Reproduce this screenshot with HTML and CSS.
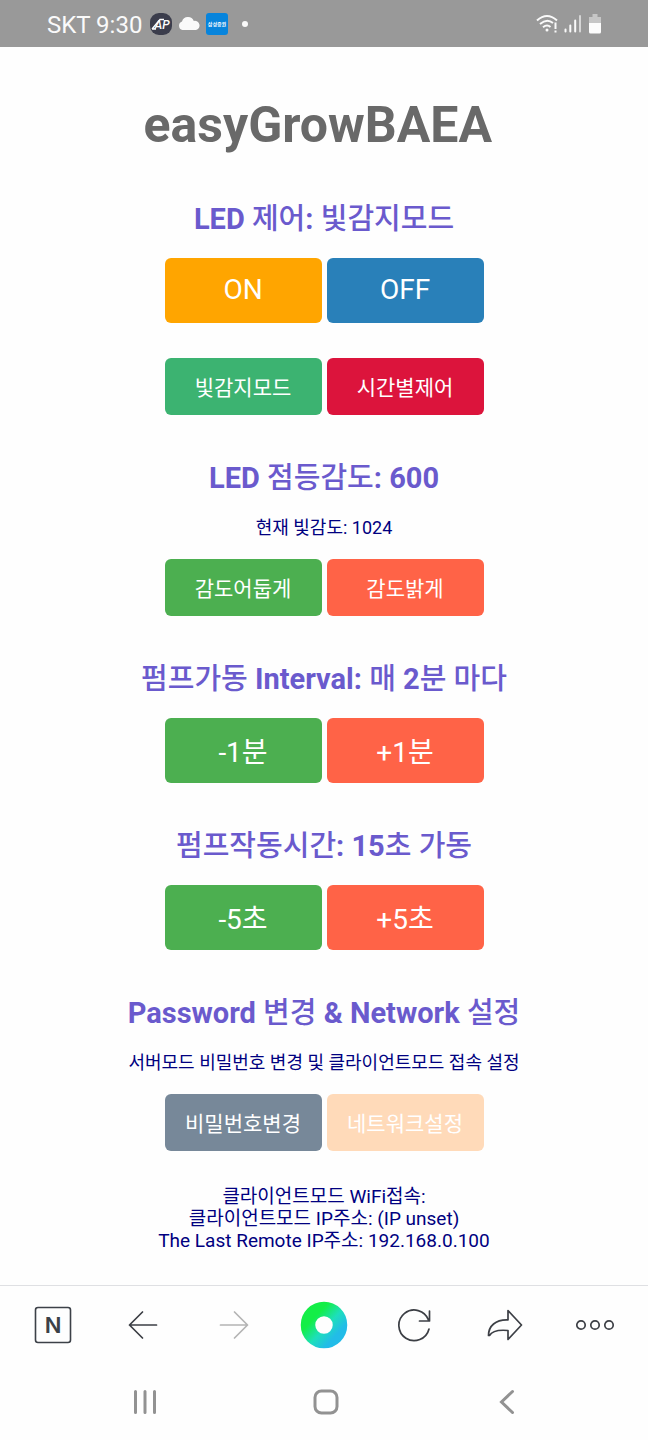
FILE: index.html
```html
<!DOCTYPE html>
<html lang="ko">
<head>
<meta charset="utf-8">
<meta name="viewport" content="width=device-width, initial-scale=1">
<title>easyGrowBAEA</title>
<link rel="stylesheet" href="styles.css">
</head>
<body>
<header class="status">
  <div class="status-group">
    <span class="carrier">SKT 9:30</span>
    <svg width="22" height="22" viewBox="0 0 22 22" aria-hidden="true">
      <rect width="22" height="22" rx="9" fill="#3b3d4c"/>
      <path d="M2 16L10 6.500h4M2 16h4" fill="none" stroke="#ffffff" stroke-width="1.300"/>
      <text class="ap-logo" x="12" y="16" text-anchor="middle">AP</text>
    </svg>
    <svg width="22" height="22" viewBox="0 0 22 22" aria-hidden="true">
      <path d="M4.500 17a4.500 4.500 0 0 1-.5-8.600A6.200 6.200 0 0 1 15.800 8a4.600 4.600 0 0 1 2.200 9z" fill="#fafafa"/>
    </svg>
    <svg width="22" height="22" viewBox="0 0 22 22" aria-hidden="true">
      <rect width="22" height="22" rx="3" fill="#0784dc"/>
      <text class="bank-logo" x="11" y="13" text-anchor="middle">삼성증권</text>
    </svg>
    <span class="more-dot"></span>
  </div>
  <div class="status-group status-right">
    <svg width="22" height="20" viewBox="0 0 22 20" fill="none" stroke="#fafafa" stroke-width="2" aria-hidden="true">
      <path d="M1 6.500Q11-2.500 21 6.500M4 10Q11 4 17 9M7 13.300Q11 10 14.500 13"/>
      <circle cx="11" cy="16" r="1.500" fill="#fafafa" stroke="none"/>
      <path d="M19.500 8.500v6.500M19.500 16.500v2"/>
    </svg>
    <svg width="18" height="20" viewBox="0 0 18 20" fill="none" stroke="#fafafa" stroke-width="2" stroke-linecap="round" aria-hidden="true">
      <path d="M1.500 15.500v2M6.300 11.500v6M11.200 6.500v11"/>
      <path d="M16 2v15.500" stroke="#d6d6d6"/>
    </svg>
    <svg width="14" height="20" viewBox="0 0 14 20" aria-hidden="true">
      <path d="M4.500 0h5v3H13v7H1V3h3.500z" fill="#c6c6c6"/>
      <path d="M1 9h12v9a1.500 1.500 0 0 1-1.500 1.500h-9A1.500 1.500 0 0 1 1 18z" fill="#fcfcfc"/>
    </svg>
  </div>
</header>

<main class="page">
  <h1>easyGrowBAEA&nbsp;</h1>

  <section>
    <h2>LED <span class="ko">제어</span>: <span class="ko">빛감지모드</span></h2>
    <div class="pair large">
      <button class="orange">ON</button>
      <button class="blue">OFF</button>
    </div>
    <div class="pair small spaced">
      <button class="sea">빛감지모드</button>
      <button class="crimson">시간별제어</button>
    </div>
  </section>

  <section>
    <h2>LED <span class="ko">점등감도</span>: 600</h2>
    <p class="note">현재 빛감도: 1024</p>
    <div class="pair small">
      <button class="green">감도어둡게</button>
      <button class="tomato">감도밝게</button>
    </div>
  </section>

  <section>
    <h2><span class="ko">펌프가동</span> Interval: <span class="ko">매</span> 2<span class="ko">분 마다</span></h2>
    <div class="pair large">
      <button class="green">-1분</button>
      <button class="tomato">+1분</button>
    </div>
  </section>

  <section>
    <h2><span class="ko">펌프작동시간</span>: 15<span class="ko">초 가동</span></h2>
    <div class="pair large">
      <button class="green">-5초</button>
      <button class="tomato">+5초</button>
    </div>
  </section>

  <section>
    <h2>Password <span class="ko">변경</span> &amp; Network <span class="ko">설정</span></h2>
    <p class="note">서버모드 비밀번호 변경 및 클라이언트모드 접속 설정</p>
    <div class="pair small">
      <button class="slate">비밀번호변경</button>
      <button class="peach">네트워크설정</button>
    </div>
    <p class="info">클라이언트모드 WiFi접속:<br>클라이언트모드 IP주소: (IP unset)<br>The Last Remote IP주소: 192.168.0.100</p>
  </section>
</main>

<nav class="toolbar" aria-label="브라우저">
  <button aria-label="홈">
    <svg width="38" height="38" viewBox="0 0 38 38" aria-hidden="true">
      <rect x="1.500" y="1.500" width="35" height="35" rx="2.500" fill="none" stroke="#3c4148" stroke-width="1.600"/>
      <text class="n-logo" x="19" y="27" text-anchor="middle">N</text>
    </svg>
  </button>
  <button aria-label="뒤로">
    <svg class="line" width="30" height="30" viewBox="0 0 30 30" aria-hidden="true"><path d="M28.500 15H1.500M14.500 2L1.500 15l13 13"/></svg>
  </button>
  <button aria-label="앞으로" disabled>
    <svg class="line faded" width="30" height="30" viewBox="0 0 30 30" aria-hidden="true"><path d="M1.500 15h27M15.500 2l13 13-13 13"/></svg>
  </button>
  <button aria-label="그린닷">
    <svg width="48" height="48" viewBox="0 0 48 48" aria-hidden="true">
      <defs>
        <linearGradient id="dot" x1="0.100" y1="0.150" x2="0.850" y2="0.850">
          <stop offset="0.150" stop-color="#14ee47"/>
          <stop offset="0.600" stop-color="#1ddfbb"/>
          <stop offset="1" stop-color="#22bce8"/>
        </linearGradient>
      </defs>
      <circle cx="24" cy="24" r="16" fill="none" stroke="url(#dot)" stroke-width="14.500"/>
    </svg>
  </button>
  <button aria-label="새로고침">
    <svg class="line" width="36" height="36" viewBox="0 0 36 36" aria-hidden="true"><path d="M33 22A15.300 15.300 0 1 1 32.500 13M33.500 4v10h-10"/></svg>
  </button>
  <button aria-label="공유">
    <svg class="line" width="36" height="34" viewBox="0 0 36 34" aria-hidden="true"><path d="M21 2.500L34.500 17 21 31.500V22.500C10 21.500 5 23 2.500 27.500H1.500C1.500 18 8.500 11.500 21 12z"/></svg>
  </button>
  <button aria-label="더보기">
    <svg class="line" width="40" height="12" viewBox="0 0 40 12" aria-hidden="true"><circle cx="6" cy="6" r="4.200"/><circle cx="20" cy="6" r="4.200"/><circle cx="34" cy="6" r="4.200"/></svg>
  </button>
</nav>

<nav class="system" aria-label="시스템">
  <button aria-label="최근 앱">
    <svg width="26" height="26" viewBox="0 0 26 26" aria-hidden="true"><path d="M3.500 2.500v21M13 2.500v21M22.500 2.500v21"/></svg>
  </button>
  <button aria-label="홈">
    <svg width="28" height="28" viewBox="0 0 28 28" aria-hidden="true"><rect x="3" y="3" width="22" height="22" rx="6.500"/></svg>
  </button>
  <button aria-label="이전">
    <svg width="26" height="26" viewBox="0 0 26 26" aria-hidden="true"><path d="M18.500 2.500L7.500 13l11 10.500"/></svg>
  </button>
</nav>
</body>
</html>
```
FILE: styles.css
```css
* { box-sizing: border-box; }

body {
  margin: 0;
  min-height: 100vh;
  display: flex;
  flex-direction: column;
  background: #fefefe;
  font-family: Roboto, "Noto Sans CJK KR", sans-serif;
}

h1, h2, p { margin: 0; }

button {
  border: 0;
  padding: 0;
  background: none;
  font-family: inherit;
  cursor: pointer;
}

svg { display: block; }

.status {
  display: flex;
  justify-content: space-between;
  align-items: center;
  height: 47px;
  padding: 0 46px 0 47px;
  background: #999999;
  color: #fafafa;
}

.status-group {
  display: flex;
  align-items: center;
  gap: 6px;
}

.carrier {
  margin-right: 2px;
  font-size: 24px;
  line-height: 30px;
  padding-top: 3px;
}

.ap-logo {
  font: italic 500 12px Roboto, sans-serif;
  fill: #ffffff;
}

.bank-logo {
  font: 700 5px "Noto Sans CJK KR", sans-serif;
  fill: #ffffff;
}

.more-dot {
  width: 6px;
  height: 6px;
  margin-left: 8px;
  border-radius: 50%;
  background: #fafafa;
}

.page {
  flex: 1;
  padding: 48px 16px 32px;
  text-align: center;
}

h1 {
  margin-bottom: 46px;
  font-size: 50px;
  line-height: 60px;
  color: #696969;
}

h2 {
  margin-bottom: 21px;
  font-size: 29px;
  line-height: 36px;
  color: #6a5acd;
}

.ko { font-weight: 500; }

section + section { margin-top: 45px; }

.note, .info {
  line-height: 22px;
  color: #000080;
}

.note {
  margin-bottom: 20px;
  font-size: 18px;
}

.info {
  margin-top: 35px;
  font-size: 19px;
}

.pair {
  display: flex;
  justify-content: center;
  gap: 5px;
}

.pair.spaced { margin-top: 35px; }

.pair button {
  width: 157px;
  padding-bottom: 2px;
  border-radius: 6px;
  color: #ffffff;
}

.large button {
  height: 65px;
  font-size: 28px;
}

.small button {
  height: 57px;
  font-size: 21px;
}

.orange { background: #ffa500; }
.blue { background: #2980b9; }
.sea { background: #3cb371; }
.crimson { background: #dc143c; }
.green { background: #4caf50; }
.tomato { background: #ff6347; }
.slate { background: #778899; }
.peach { background: #ffdab9; }

.toolbar {
  display: grid;
  grid-template-columns: repeat(7, 1fr);
  height: 79px;
  padding: 0 8px;
  border-top: 1px solid #dfe0e3;
}

.toolbar button, .system button {
  display: flex;
  justify-content: center;
  align-items: center;
}

.line {
  fill: none;
  stroke: #3c3f45;
  stroke-width: 1.7;
  stroke-linecap: round;
  stroke-linejoin: round;
}

.faded { stroke: #b4b4b4; }

.n-logo {
  font: 600 22px Inter, sans-serif;
  fill: #3c4148;
}

.system {
  display: grid;
  grid-template-columns: repeat(3, 1fr);
  height: 76px;
  padding: 0 50px 0 54px;
}

.system svg {
  fill: none;
  stroke: #929292;
  stroke-width: 3;
  stroke-linecap: round;
}
```
